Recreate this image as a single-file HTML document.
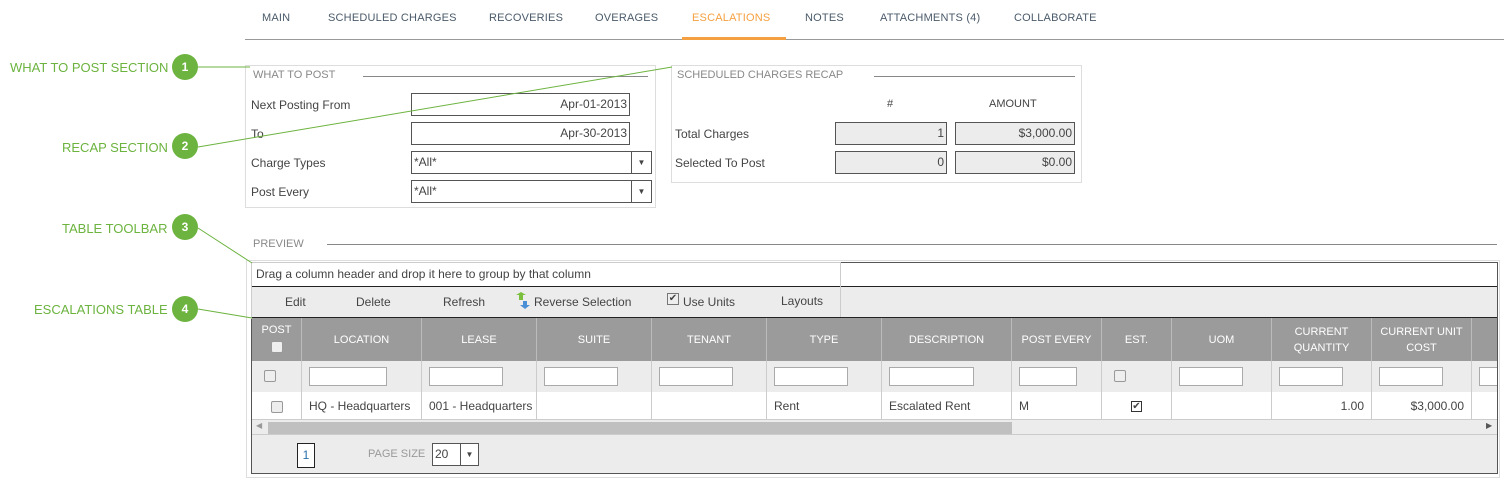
<!DOCTYPE html><html><head><style>
*{box-sizing:border-box;margin:0;padding:0}
body{width:1507px;height:488px;background:#fff;font-family:"Liberation Sans",sans-serif;font-size:12px;color:#444;position:relative;overflow:hidden}
.a{position:absolute}
.tab{position:absolute;top:12px;font-size:11px;color:#4a5a6a;letter-spacing:.2px}
.g{color:#6cb33f;font-size:13px;position:absolute}
.c{position:absolute;width:26px;height:26px;border-radius:50%;background:#6cb33f;color:#fff;font-weight:bold;font-size:12px;text-align:center;line-height:26px}
.inp{position:absolute;border:1px solid #555;background:#fff;height:23px;font-size:12px;line-height:21px;padding:0 2px}
.r{text-align:right}
.dd{position:absolute;right:0;top:0;width:20px;height:21px;border-left:1px solid #555;font-size:8px;text-align:center;line-height:21px}
.lbl{position:absolute;font-size:12px;color:#444}
.th{position:absolute;top:318px;height:43px;background:#9b9b9b;color:#fff;font-size:11px;text-align:center;border-right:1px solid #bbb;display:flex;align-items:center;justify-content:center;line-height:16px}
.fl{position:absolute;top:361px;height:31px;background:#ececec;border-right:1px solid #ccc}
.fl i{position:absolute;left:7px;top:6px;height:19px;background:#fff;border:1px solid #aaa}
.dc{position:absolute;top:392px;height:28px;background:#fff;border-right:1px solid #ccc;border-bottom:1px solid #ccc;font-size:12px;line-height:28px;padding:0 7px;white-space:nowrap;overflow:hidden}
.cb{display:inline-block;width:12px;height:12px;border:1px solid #999;border-radius:2px;background:#eee;vertical-align:middle}
</style></head><body>
<div class="tab" style="left:262px">MAIN</div>
<div class="tab" style="left:328px">SCHEDULED CHARGES</div>
<div class="tab" style="left:489px">RECOVERIES</div>
<div class="tab" style="left:595px">OVERAGES</div>
<div class="tab" style="left:692px;color:#f5a040">ESCALATIONS</div>
<div class="tab" style="left:805px">NOTES</div>
<div class="tab" style="left:880px">ATTACHMENTS (4)</div>
<div class="tab" style="left:1014px">COLLABORATE</div>
<div class="a" style="left:245px;top:39px;width:1259px;height:1px;background:#999"></div>
<div class="a" style="left:682px;top:37px;width:104px;height:3px;background:#f5a040"></div>

<div class="g" style="left:10px;top:60px">WHAT TO POST SECTION</div>
<div class="g" style="left:62px;top:140px">RECAP SECTION</div>
<div class="g" style="left:62px;top:221px">TABLE TOOLBAR</div>
<div class="g" style="left:34px;top:302px">ESCALATIONS TABLE</div>
<div class="c" style="left:172px;top:54px">1</div>
<div class="c" style="left:172px;top:133px">2</div>
<div class="c" style="left:172px;top:214px">3</div>
<div class="c" style="left:172px;top:296px">4</div>

<div class="a" style="left:245px;top:65px;width:411px;height:143px;border:1px solid #ddd"></div>
<div class="lbl" style="left:253px;top:69px;font-size:11px;color:#888">WHAT TO POST</div>
<div class="a" style="left:363px;top:76px;width:285px;height:1px;background:#888"></div>
<div class="lbl" style="left:251px;top:98px">Next Posting From</div>
<div class="lbl" style="left:251px;top:127px">To</div>
<div class="lbl" style="left:251px;top:156px">Charge Types</div>
<div class="lbl" style="left:251px;top:185px">Post Every</div>
<div class="inp r" style="left:411px;top:93px;width:219px">Apr-01-2013</div>
<div class="inp r" style="left:411px;top:122px;width:219px">Apr-30-2013</div>
<div class="inp" style="left:411px;top:151px;width:241px">*All*<span class="dd">▼</span></div>
<div class="inp" style="left:411px;top:180px;width:241px">*All*<span class="dd">▼</span></div>

<div class="a" style="left:671px;top:65px;width:411px;height:118px;border:1px solid #ddd"></div>
<div class="lbl" style="left:677px;top:69px;font-size:11px;color:#888">SCHEDULED CHARGES RECAP</div>
<div class="a" style="left:874px;top:76px;width:201px;height:1px;background:#888"></div>
<div class="lbl" style="left:887px;top:98px;font-size:11px">#</div>
<div class="lbl" style="left:989px;top:98px;font-size:11px">AMOUNT</div>
<div class="lbl" style="left:675px;top:127px">Total Charges</div>
<div class="lbl" style="left:675px;top:156px">Selected To Post</div>
<div class="inp r" style="left:835px;top:122px;width:112px;background:#ececec">1</div>
<div class="inp r" style="left:955px;top:122px;width:120px;background:#ececec">$3,000.00</div>
<div class="inp r" style="left:835px;top:151px;width:112px;background:#ececec">0</div>
<div class="inp r" style="left:955px;top:151px;width:120px;background:#ececec">$0.00</div>

<div class="lbl" style="left:253px;top:238px;font-size:11px;color:#888">PREVIEW</div>
<div class="a" style="left:327px;top:244px;width:1170px;height:1px;background:#888"></div>
<div class="a" style="left:246px;top:260px;width:1254px;height:218px;border:1px solid #ddd"></div>
<div class="a" style="left:251px;top:262px;width:1247px;height:212px;border:1px solid #555;background:#ececec"></div>
<div class="a" style="left:252px;top:263px;width:1245px;height:24px;background:#fff;border-bottom:1px solid #222;font-size:12px;line-height:22px;padding-left:4px">Drag a column header and drop it here to group by that column</div>
<div class="a" style="left:251px;top:262px;width:590px;height:57px;border:1px solid #ccc"></div>
<div class="lbl" style="left:285px;top:295px">Edit</div>
<div class="lbl" style="left:356px;top:295px">Delete</div>
<div class="lbl" style="left:443px;top:295px">Refresh</div>
<svg class="a" style="left:515px;top:292px" width="16" height="17"><path d="M4 8 L4 3 L1 3 L6 0 L11 3 L8 3 L8 8Z" fill="#7cbf3f"/><path d="M8 9 L8 13 L5 13 L10 17 L15 13 L12 13 L12 9Z" fill="#4a8ed6"/></svg>
<div class="lbl" style="left:534px;top:295px">Reverse Selection</div>
<div class="a" style="left:667px;top:293px;width:12px;height:12px;border:1px solid #777;background:#eee;font-size:10px;line-height:10px;text-align:center">✔</div>
<div class="lbl" style="left:683px;top:295px">Use Units</div>
<div class="lbl" style="left:781px;top:294px">Layouts</div>
<div class="a" style="left:252px;top:317px;width:1245px;height:1px;background:#222"></div>

<div class="th" style="left:252px;width:50px;flex-direction:column;align-items:center;justify-content:flex-start;padding-top:4px">POST<span class="cb" style="margin-top:3px"></span></div>
<div class="th" style="left:302px;width:120px">LOCATION</div>
<div class="th" style="left:422px;width:115px">LEASE</div>
<div class="th" style="left:537px;width:115px">SUITE</div>
<div class="th" style="left:652px;width:115px">TENANT</div>
<div class="th" style="left:767px;width:115px">TYPE</div>
<div class="th" style="left:882px;width:130px">DESCRIPTION</div>
<div class="th" style="left:1012px;width:90px">POST EVERY</div>
<div class="th" style="left:1102px;width:70px">EST.</div>
<div class="th" style="left:1172px;width:100px">UOM</div>
<div class="th" style="left:1272px;width:100px">CURRENT<br>QUANTITY</div>
<div class="th" style="left:1372px;width:100px">CURRENT UNIT<br>COST</div>
<div class="th" style="left:1472px;width:25px;border-right:none"></div>

<div class="fl" style="left:252px;width:50px"><span class="cb" style="position:absolute;left:12px;top:9px"></span></div>
<div class="fl" style="left:302px;width:120px"><i style="width:78px"></i></div>
<div class="fl" style="left:422px;width:115px"><i style="width:74px"></i></div>
<div class="fl" style="left:537px;width:115px"><i style="width:74px"></i></div>
<div class="fl" style="left:652px;width:115px"><i style="width:74px"></i></div>
<div class="fl" style="left:767px;width:115px"><i style="width:74px"></i></div>
<div class="fl" style="left:882px;width:130px"><i style="width:85px"></i></div>
<div class="fl" style="left:1012px;width:90px"><i style="width:58px"></i></div>
<div class="fl" style="left:1102px;width:70px"><span class="cb" style="position:absolute;left:12px;top:9px"></span></div>
<div class="fl" style="left:1172px;width:100px"><i style="width:64px"></i></div>
<div class="fl" style="left:1272px;width:100px"><i style="width:64px"></i></div>
<div class="fl" style="left:1372px;width:100px"><i style="width:64px"></i></div>
<div class="fl" style="left:1472px;width:25px;border-right:none;overflow:hidden"><i style="width:30px"></i></div>

<div class="dc" style="left:252px;width:50px;text-align:center"><span class="cb"></span></div>
<div class="dc" style="left:302px;width:120px">HQ - Headquarters</div>
<div class="dc" style="left:422px;width:115px;padding-left:7px">001 - Headquarters</div>
<div class="dc" style="left:537px;width:115px"></div>
<div class="dc" style="left:652px;width:115px"></div>
<div class="dc" style="left:767px;width:115px">Rent</div>
<div class="dc" style="left:882px;width:130px">Escalated Rent</div>
<div class="dc" style="left:1012px;width:90px">M</div>
<div class="dc" style="left:1102px;width:70px;text-align:center"><span style="display:inline-block;width:11px;height:11px;border:1px solid #333;background:#fff;font-size:10px;line-height:9px;vertical-align:middle">✔</span></div>
<div class="dc" style="left:1172px;width:100px"></div>
<div class="dc r" style="left:1272px;width:100px">1.00</div>
<div class="dc r" style="left:1372px;width:100px">$3,000.00</div>
<div class="dc" style="left:1472px;width:25px;border-right:none"></div>

<div class="a" style="left:252px;top:420px;width:1245px;height:15px;background:#ececec;border-bottom:1px solid #ccc"></div>
<div class="a" style="left:268px;top:422px;width:744px;height:12px;background:#c0c0c0"></div>
<div class="a" style="left:256px;top:421px;font-size:8px;color:#999">◀</div>
<div class="a" style="left:1486px;top:421px;font-size:8px;color:#555">▶</div>

<div class="a" style="left:297px;top:443px;width:18px;height:25px;border:1px solid #222;background:#fff;font-size:12px;line-height:23px;text-align:center;color:#2a6fa8">1</div>
<div class="lbl" style="left:368px;top:448px;font-size:11px;color:#999">PAGE SIZE</div>
<div class="inp" style="left:432px;top:443px;width:47px;height:23px;line-height:21px">20<span class="dd" style="width:18px">▼</span></div>

<svg class="a" style="left:0;top:0;z-index:10" width="1507" height="488"><g stroke="#6cb33f" stroke-width="1" fill="none"><line x1="198" y1="67" x2="250" y2="67"/><line x1="198" y1="147" x2="672" y2="67"/><line x1="198" y1="228" x2="252" y2="263"/><line x1="198" y1="309" x2="252" y2="318"/></g></svg>
</body></html>
